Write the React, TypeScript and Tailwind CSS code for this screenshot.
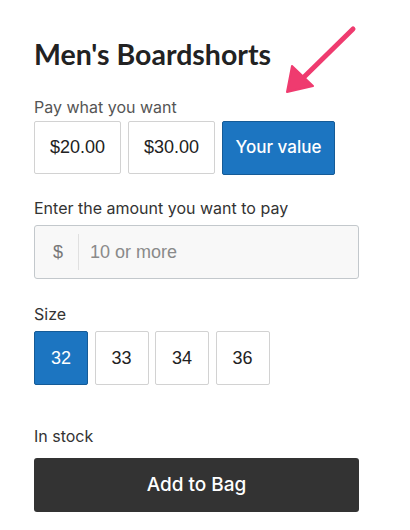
import React, { useState } from "react";

const prices = ["$20.00", "$30.00"];
const sizes = ["32", "33", "34", "36"];

function Arrow() {
  return (
    <svg
      className="absolute left-[280px] top-[20px]"
      width="85"
      height="80"
      viewBox="0 0 85 80"
    >
      <line x1="73" y1="9" x2="22" y2="59" stroke="#ef3b6f" strokeWidth="5" strokeLinecap="round" />
      <polygon points="7,72 12,46 33,66" fill="#ef3b6f" stroke="#ef3b6f" strokeWidth="2" strokeLinejoin="round" />
    </svg>
  );
}

export default function App() {
  const [price, setPrice] = useState("custom");
  const [size, setSize] = useState("32");

  return (
    <div className="relative min-h-[530px] w-[410px] bg-white font-['Inter',sans-serif] text-[#333]">
      <Arrow />
      <div className="flex w-[359px] flex-col pl-[34px] pt-[36px]">
        <h1 className="font-['Lato',sans-serif] text-[28.5px] font-bold leading-[36px] text-[#222]">
          Men's Boardshorts
        </h1>

        <p className="mt-[23px] text-[16px] leading-[24px] text-[#555]">Pay what you want</p>
        <div className="mt-[2px] flex gap-[7px] font-['Liberation_Sans',sans-serif]">
          {prices.map((p) => (
            <button
              key={p}
              onClick={() => setPrice(p)}
              className={`h-[53px] w-[87px] rounded-[2px] border text-[18px] ${
                price === p
                  ? "border-[#155b97] bg-[#1c75c1] text-white"
                  : "border-[#d2d2d2] bg-white text-[#222]"
              }`}
            >
              {p}
            </button>
          ))}
          <button
            onClick={() => setPrice("custom")}
            className={`h-[54px] w-[113px] rounded-[2px] border font-['Inter',sans-serif] text-[17px] font-medium ${
              price === "custom"
                ? "border-[#155b97] bg-[#1c75c1] text-white"
                : "border-[#d2d2d2] bg-white text-[#222]"
            }`}
          >
            Your value
          </button>
        </div>

        <p className="mt-[21px] text-[16px] leading-[24px] text-[#333]">
          Enter the amount you want to pay
        </p>
        <div className="mt-[5px] flex h-[54px] items-center rounded-[3px] border border-[#c3c8cc] bg-[#f8f8f8] font-['Liberation_Sans',sans-serif] text-[18px]">
          <span className="w-[43px] pl-[18px] text-[#777]">$</span>
          <span className="h-[36px] w-px bg-[#e0e0e0]" />
          <input
            placeholder="10 or more"
            className="ml-[11px] w-[200px] bg-transparent text-[#333] outline-none placeholder:text-[#8a8a8a]"
          />
        </div>

        <p className="mt-[23px] text-[16px] leading-[24px] text-[#333]">Size</p>
        <div className="mt-[5px] flex gap-[6.5px] font-['Liberation_Sans',sans-serif]">
          {sizes.map((s) => (
            <button
              key={s}
              onClick={() => setSize(s)}
              className={`h-[54px] w-[54px] rounded-[2px] border text-[18px] ${
                size === s
                  ? "border-[#155b97] bg-[#1c75c1] text-white"
                  : "border-[#d2d2d2] bg-white text-[#222]"
              }`}
            >
              {s}
            </button>
          ))}
        </div>

        <p className="mt-[39px] text-[16px] leading-[24px] text-[#333]">In stock</p>
        <button className="mt-[10px] h-[54px] w-full rounded-[3px] bg-[#333333] font-['Inter',sans-serif] text-[19px] font-medium text-white">
          Add to Bag
        </button>
      </div>
    </div>
  );
}
